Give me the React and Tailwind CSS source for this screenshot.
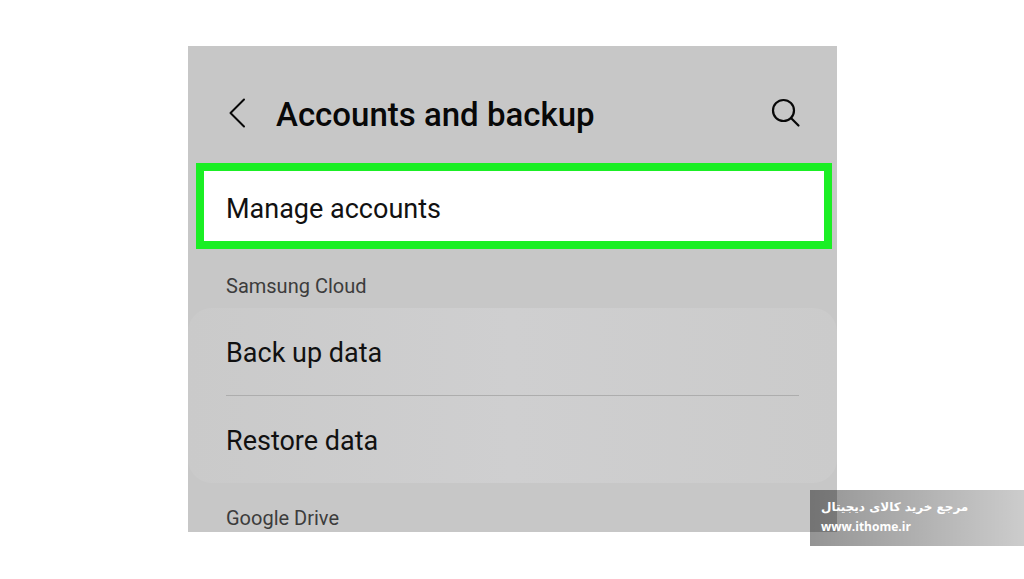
import React from "react";

const cloudItems = ["Back up data", "Restore data"];

function SectionLabel({ children }) {
    return <h2 className="px-[38px] text-[20px] leading-6 text-[#3c3c3c]">{children}</h2>;
}

function Header() {
    return (
        <header className="flex h-[117px] items-center pl-10 pr-9 pt-5">
            <button type="button" aria-label="Back" className="mr-[30px] pb-1">
                <svg width="18" height="30" viewBox="0 0 18 30" fill="none" stroke="#080808" strokeWidth="2" strokeLinecap="round" strokeLinejoin="round">
                    <path d="M16 1.5 2.5 15 16 28.5" />
                </svg>
            </button>
            <h1 className="flex-1 text-[33px] font-medium leading-10 text-[#080808]">Accounts and backup</h1>
            <button type="button" aria-label="Search" className="pb-1">
                <svg width="30" height="30" viewBox="0 0 30 30" fill="none" stroke="#080808" strokeWidth="2.2" strokeLinecap="round">
                    <circle cx="12.5" cy="12.5" r="10.5" />
                    <path d="M20 20 27.5 27.5" />
                </svg>
            </button>
        </header>
    );
}

function Watermark() {
    return (
        <aside className="absolute bottom-[33px] right-0 flex h-14 w-[214px] flex-col items-start bg-linear-to-r from-black/42 to-black/20 px-[11px] pt-[7px] font-bold text-white">
            <p dir="rtl" className="whitespace-nowrap font-['DejaVu_Sans',sans-serif] text-[12px] leading-5">
                مرجع خرید کالای دیجیتال
            </p>
            <a href="#" className="font-['Open_Sans',sans-serif] text-[12px] leading-5">
                www.ithome.ir
            </a>
        </aside>
    );
}

function App() {
    return (
        <div className="relative min-h-screen bg-white pl-47 pr-[187px] pt-[46px] font-['Roboto',sans-serif]">
            <main className="bg-[#c7c7c7]">
                <Header />
                <button
                    type="button"
                    className="mx-2 flex h-[86px] w-[calc(100%-13px)] items-center border-8 border-[#1aef24] bg-white px-[22px] pb-1 pt-2.5 text-left text-[27px] leading-8 text-[#111111]"
                >
                    Manage accounts
                </button>
                <section>
                    <div className="flex h-[59px] items-center pt-3.5">
                        <SectionLabel>Samsung Cloud</SectionLabel>
                    </div>
                    <ul className="divide-y divide-[#adadad] rounded-3xl bg-linear-to-r from-[#cacaca] via-[#cfcfd0] to-[#cbcbcb] px-[38px]">
                        {cloudItems.map((item) => (
                            <li key={item}>
                                <button type="button" className="h-[87px] w-full pt-0.5 text-left text-[27px] leading-8 text-[#111111]">
                                    {item}
                                </button>
                            </li>
                        ))}
                    </ul>
                </section>
                <section className="flex h-[49px] items-end pb-[2px]">
                    <SectionLabel>Google Drive</SectionLabel>
                </section>
            </main>
            <Watermark />
        </div>
    );
}

export default App;
